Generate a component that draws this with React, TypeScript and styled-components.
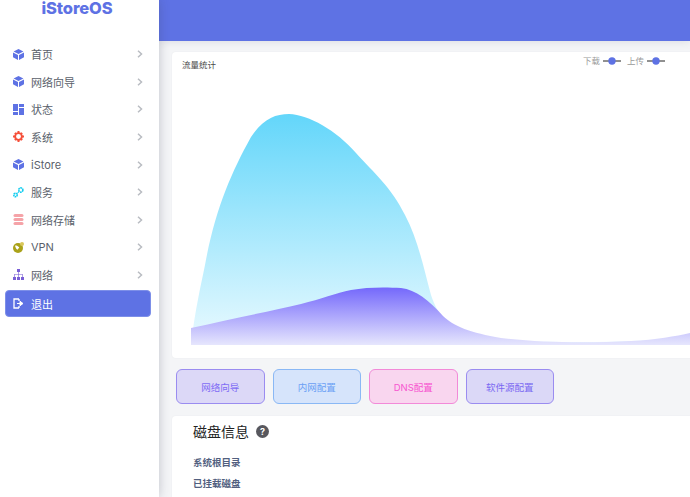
import React from "react";
import styled, { createGlobalStyle } from "styled-components";

const Global = createGlobalStyle`
  html, body { margin: 0; padding: 0; height: 100%; overflow: hidden; background: #f4f5f7; }
  body { font-family: "Inter", "Noto Sans CJK SC", sans-serif; }
  #root { height: 100%; }
`;
const Page = styled.div`display: flex; width: 690px; height: 497px; overflow: hidden;`;
const Sidebar = styled.aside`
  flex: 0 0 159px; height: 497px; background: #fff;
  box-shadow: 0 0 10px rgba(60, 66, 90, .28); position: relative; z-index: 2;
`;
const Logo = styled.div`
  height: 17px; padding: 1px 5px 0 0; text-align: center;
  font: 800 16.5px/15px "Inter", sans-serif; letter-spacing: -.1px; color: #5e72e4;
`;
const Menu = styled.nav`display: flex; flex-direction: column; margin-top: 22.4px; padding: 0 8px 0 5px;`;
const Item = styled.a<{ $active?: boolean }>`
  display: flex; align-items: center; height: 27.6px; box-sizing: border-box; padding-left: 8px;
  font-size: 11px; color: ${p => p.$active ? "#fff" : "#5a5f6b"};
  ${p => p.$active && `background:#5e72e4;border:1px solid #7d8fe8;border-radius:4px;margin-top:1px;padding-left:7px;`}
`;
const IconBox = styled.span`display: flex; width: 11px; height: 11px; margin-right: 7px; flex: none;`;
const Chevron = styled.svg`margin-left: auto; margin-right: 8px; flex: none;`;
const Main = styled.main`flex: 1; min-width: 0;`;
const Header = styled.header`height: 41px; background: #5e72e4; box-shadow: 0 1px 8px rgba(60, 66, 90, .12);`;
const Content = styled.div`width: 560px; padding: 11px 0 0 13px;`;
const Card = styled.section`background: #fff; border-radius: 4px; box-shadow: 0 0 2px rgba(60,66,90,.05);`;
const ChartCard = styled(Card)`height: 306px; box-sizing: border-box; position: relative;`;
const ChartTitle = styled.div`position: absolute; left: 10px; top: 7px; font-size: 8.5px; line-height: 12px; color: #4a4a4a;`;
const Legend = styled.div`position: absolute; left: 411px; top: 3px; display: flex; gap: 6px; font-size: 8.5px; line-height: 12px; color: #999;`;
const LegendEntry = styled.span`display: flex; align-items: center; gap: 3px;`;
const Chart = styled.svg`display: block; position: absolute; left: 19px; top: 0;`;
const Actions = styled.div`display: flex; gap: 8px; margin: 11px 0 12px 4px;`;
const Action = styled.button<{ $bg: string; $line: string; $ink: string }>`
  width: 88.5px; height: 35px; padding: 0; border-radius: 6px; font: 400 9.5px "Inter", "Noto Sans CJK SC", sans-serif;
  background: ${p => p.$bg}; border: 1px solid ${p => p.$line}; color: ${p => p.$ink};
`;
const DiskCard = styled(Card)`height: 120px; padding: 5px 0 0 21px; box-sizing: border-box;`;
const DiskTitle = styled.h3`display: flex; align-items: center; gap: 7px; margin: 0 0 11px; height: 20px; font-size: 14px; font-weight: 400; color: #222;`;
const Help = styled.span`
  display: inline-flex; align-items: center; justify-content: center; width: 13px; height: 13px; border-radius: 50%;
  background: #58585e; color: #fff; font-size: 9px; font-weight: 700;
`;
const DiskRow = styled.div`font-size: 9.5px; font-weight: 600; line-height: 21px; color: #525f7f;`;

const Cube = ({ c = "#5e72e4" }: { c?: string }) => (
  <svg width="11" height="11" viewBox="0 0 11 11"><path d="M5.5 0 10.4 2.6 5.5 5 .6 2.6z M0 3.4l5 2.5V11L0 8.3z M11 3.4 6 5.9V11l5-2.7z" fill={c} /></svg>
);
const Grid = () => (
  <svg width="11" height="11" viewBox="0 0 11 11" fill="#5e72e4"><rect width="5" height="7" /><rect y="8" width="5" height="3" /><rect x="6" width="5" height="3" /><rect x="6" y="4" width="5" height="7" /></svg>
);
const Gear = () => (
  <svg width="11" height="11" viewBox="0 0 11 11"><circle cx="5.5" cy="5.5" r="3.4" fill="none" stroke="#f5503a" strokeWidth="1.9" /><path d="M4.5 0h2v2h-2zM4.5 9h2v2h-2zM0 4.5h2v2H0zM9 4.5h2v2H9zM1.2 2.6l1.4-1.4 1.1 1.1-1.4 1.4zM7.3 8.7l1.4-1.4 1.1 1.1-1.4 1.4zM1.2 8.4l1.1-1.1 1.4 1.4-1.1 1.1zM7.3 2.3l1.1-1.1 1.4 1.4-1.1 1.1z" fill="#f5503a" /></svg>
);
const Service = () => (
  <svg width="11" height="11" viewBox="0 0 11 11" fill="none" stroke="#13cdef" strokeWidth="1.6"><circle cx="7.8" cy="3" r="2.1" strokeDasharray="1.6 .5" /><circle cx="2.5" cy="8" r="1.7" strokeDasharray="1.4 .4" /><path d="M4 6.5 6 4.8" strokeWidth="1" /></svg>
);
const Storage = () => (
  <svg width="11" height="11" viewBox="0 0 11 11" fill="#f5a3a8"><rect x=".5" y="0" width="10" height="3" rx="1.5" /><rect x=".5" y="4" width="10" height="3" rx="1.5" /><rect x=".5" y="8" width="10" height="3" rx="1.5" /></svg>
);
const Vpn = () => (
  <svg width="11" height="11" viewBox="0 0 11 11"><circle cx="5" cy="6" r="5" fill="#aaa21a" /><path d="M2 3.8c2-.8 3 .5 4.3 1.8L4.4 7.8C3 7 2.6 5.5 2 3.8z" fill="#fff" /><circle cx="9" cy="2" r="2" fill="#d8c65a" /></svg>
);
const Network = () => (
  <svg width="11" height="11" viewBox="0 0 11 11" fill="#7a5fd6"><rect x="4" y="0" width="3" height="3" /><rect x="0" y="8" width="3" height="3" /><rect x="4" y="8" width="3" height="3" /><rect x="8" y="8" width="3" height="3" /><path d="M5.2 3h.6v2h3.9v3h-.6V5.6H5.8V8h-.6V5.6H1.9V8h-.6V5h3.9z" /></svg>
);
const Logout = () => (
  <svg width="11" height="11" viewBox="0 0 11 11" fill="none" stroke="#fff" strokeWidth="1.3"><path d="M6 1H1v9h5M6 1v2M6 10V8" /><path d="M4 5.5h4M7 3.3 10 5.5 7 7.7z" fill="#fff" strokeWidth="1" /></svg>
);

const items: [string, React.ReactNode][] = [
  ["首页", <Cube />], ["网络向导", <Cube />], ["状态", <Grid />], ["系统", <Gear />], ["iStore", <Cube />],
  ["服务", <Service />], ["网络存储", <Storage />], ["VPN", <Vpn />], ["网络", <Network />],
];

const Mark = () => (
  <svg width="18" height="8" viewBox="0 0 18 8"><path d="M0 4h18" stroke="#222" strokeWidth="1" /><circle cx="9" cy="4" r="3.7" fill="#5e72e4" /></svg>
);

const blue = "M0 250 C4 215 10 190 14 170 C24 115 40 78 60 42 C72 24 84 19 98 19 C118 20 145 35 165 58 C183 78 200 92 214 120 C226 142 232 170 240 200 C247 220 256 232 274 240 C300 247 340 247 390 247 C430 247 470 245 499 243 L499 250 Z";
const purple = "M0 233 C40 224 80 216 110 209 C130 204 145 198 160 195 C175 192 195 192 210 193 C225 195 238 205 252 221 C262 231 280 238 310 243 C350 248 400 248 440 246 C465 245 485 241 499 238 L499 250 L0 250 Z";

const actions = [
  { t: "网络向导", bg: "#dcd8f7", line: "#9a8cf0", ink: "#7f6df5" },
  { t: "内网配置", bg: "#d6e4fb", line: "#8ab8f5", ink: "#6a9ff5" },
  { t: "DNS配置", bg: "#f9d6ef", line: "#f28ad8", ink: "#f755cf" },
  { t: "软件源配置", bg: "#dbd8f7", line: "#9a8cf0", ink: "#7a68f2" },
];

export default function App() {
  return (
    <Page>
      <Global />
      <Sidebar>
        <Logo>iStoreOS</Logo>
        <Menu>
          {items.map(([label, icon]) => (
            <Item key={label}>
              <IconBox>{icon}</IconBox>
              {label}
              <Chevron width="6" height="8" viewBox="0 0 6 8" fill="none" stroke="#b9bcc2" strokeWidth="1.5"><path d="M1 .8 4.5 4 1 7.2" /></Chevron>
            </Item>
          ))}
          <Item $active><IconBox><Logout /></IconBox>退出</Item>
        </Menu>
      </Sidebar>
      <Main>
        <Header />
        <Content>
          <ChartCard>
            <ChartTitle>流量统计</ChartTitle>
            <Legend>
              <LegendEntry>下载<Mark /></LegendEntry>
              <LegendEntry>上传<Mark /></LegendEntry>
            </Legend>
            <Chart width="499" height="293" viewBox="0 -43 499 293">
              <defs>
                <linearGradient id="gb" x1="0" y1="0" x2="0" y2="1"><stop offset="0" stopColor="#63d6fa" /><stop offset="1" stopColor="#eafaff" /></linearGradient>
                <linearGradient id="gp" x1="0" y1="0" x2="0" y2="1"><stop offset="0" stopColor="#7468fb" /><stop offset="1" stopColor="#e6e6fd" /></linearGradient>
              </defs>
              <path d={blue} fill="url(#gb)" />
              <path d={purple} fill="url(#gp)" />
            </Chart>
          </ChartCard>
          <Actions>
            {actions.map(a => <Action key={a.t} $bg={a.bg} $line={a.line} $ink={a.ink}>{a.t}</Action>)}
          </Actions>
          <DiskCard>
            <DiskTitle>磁盘信息<Help>?</Help></DiskTitle>
            <DiskRow>系统根目录</DiskRow>
            <DiskRow>已挂载磁盘</DiskRow>
          </DiskCard>
        </Content>
      </Main>
    </Page>
  );
}
